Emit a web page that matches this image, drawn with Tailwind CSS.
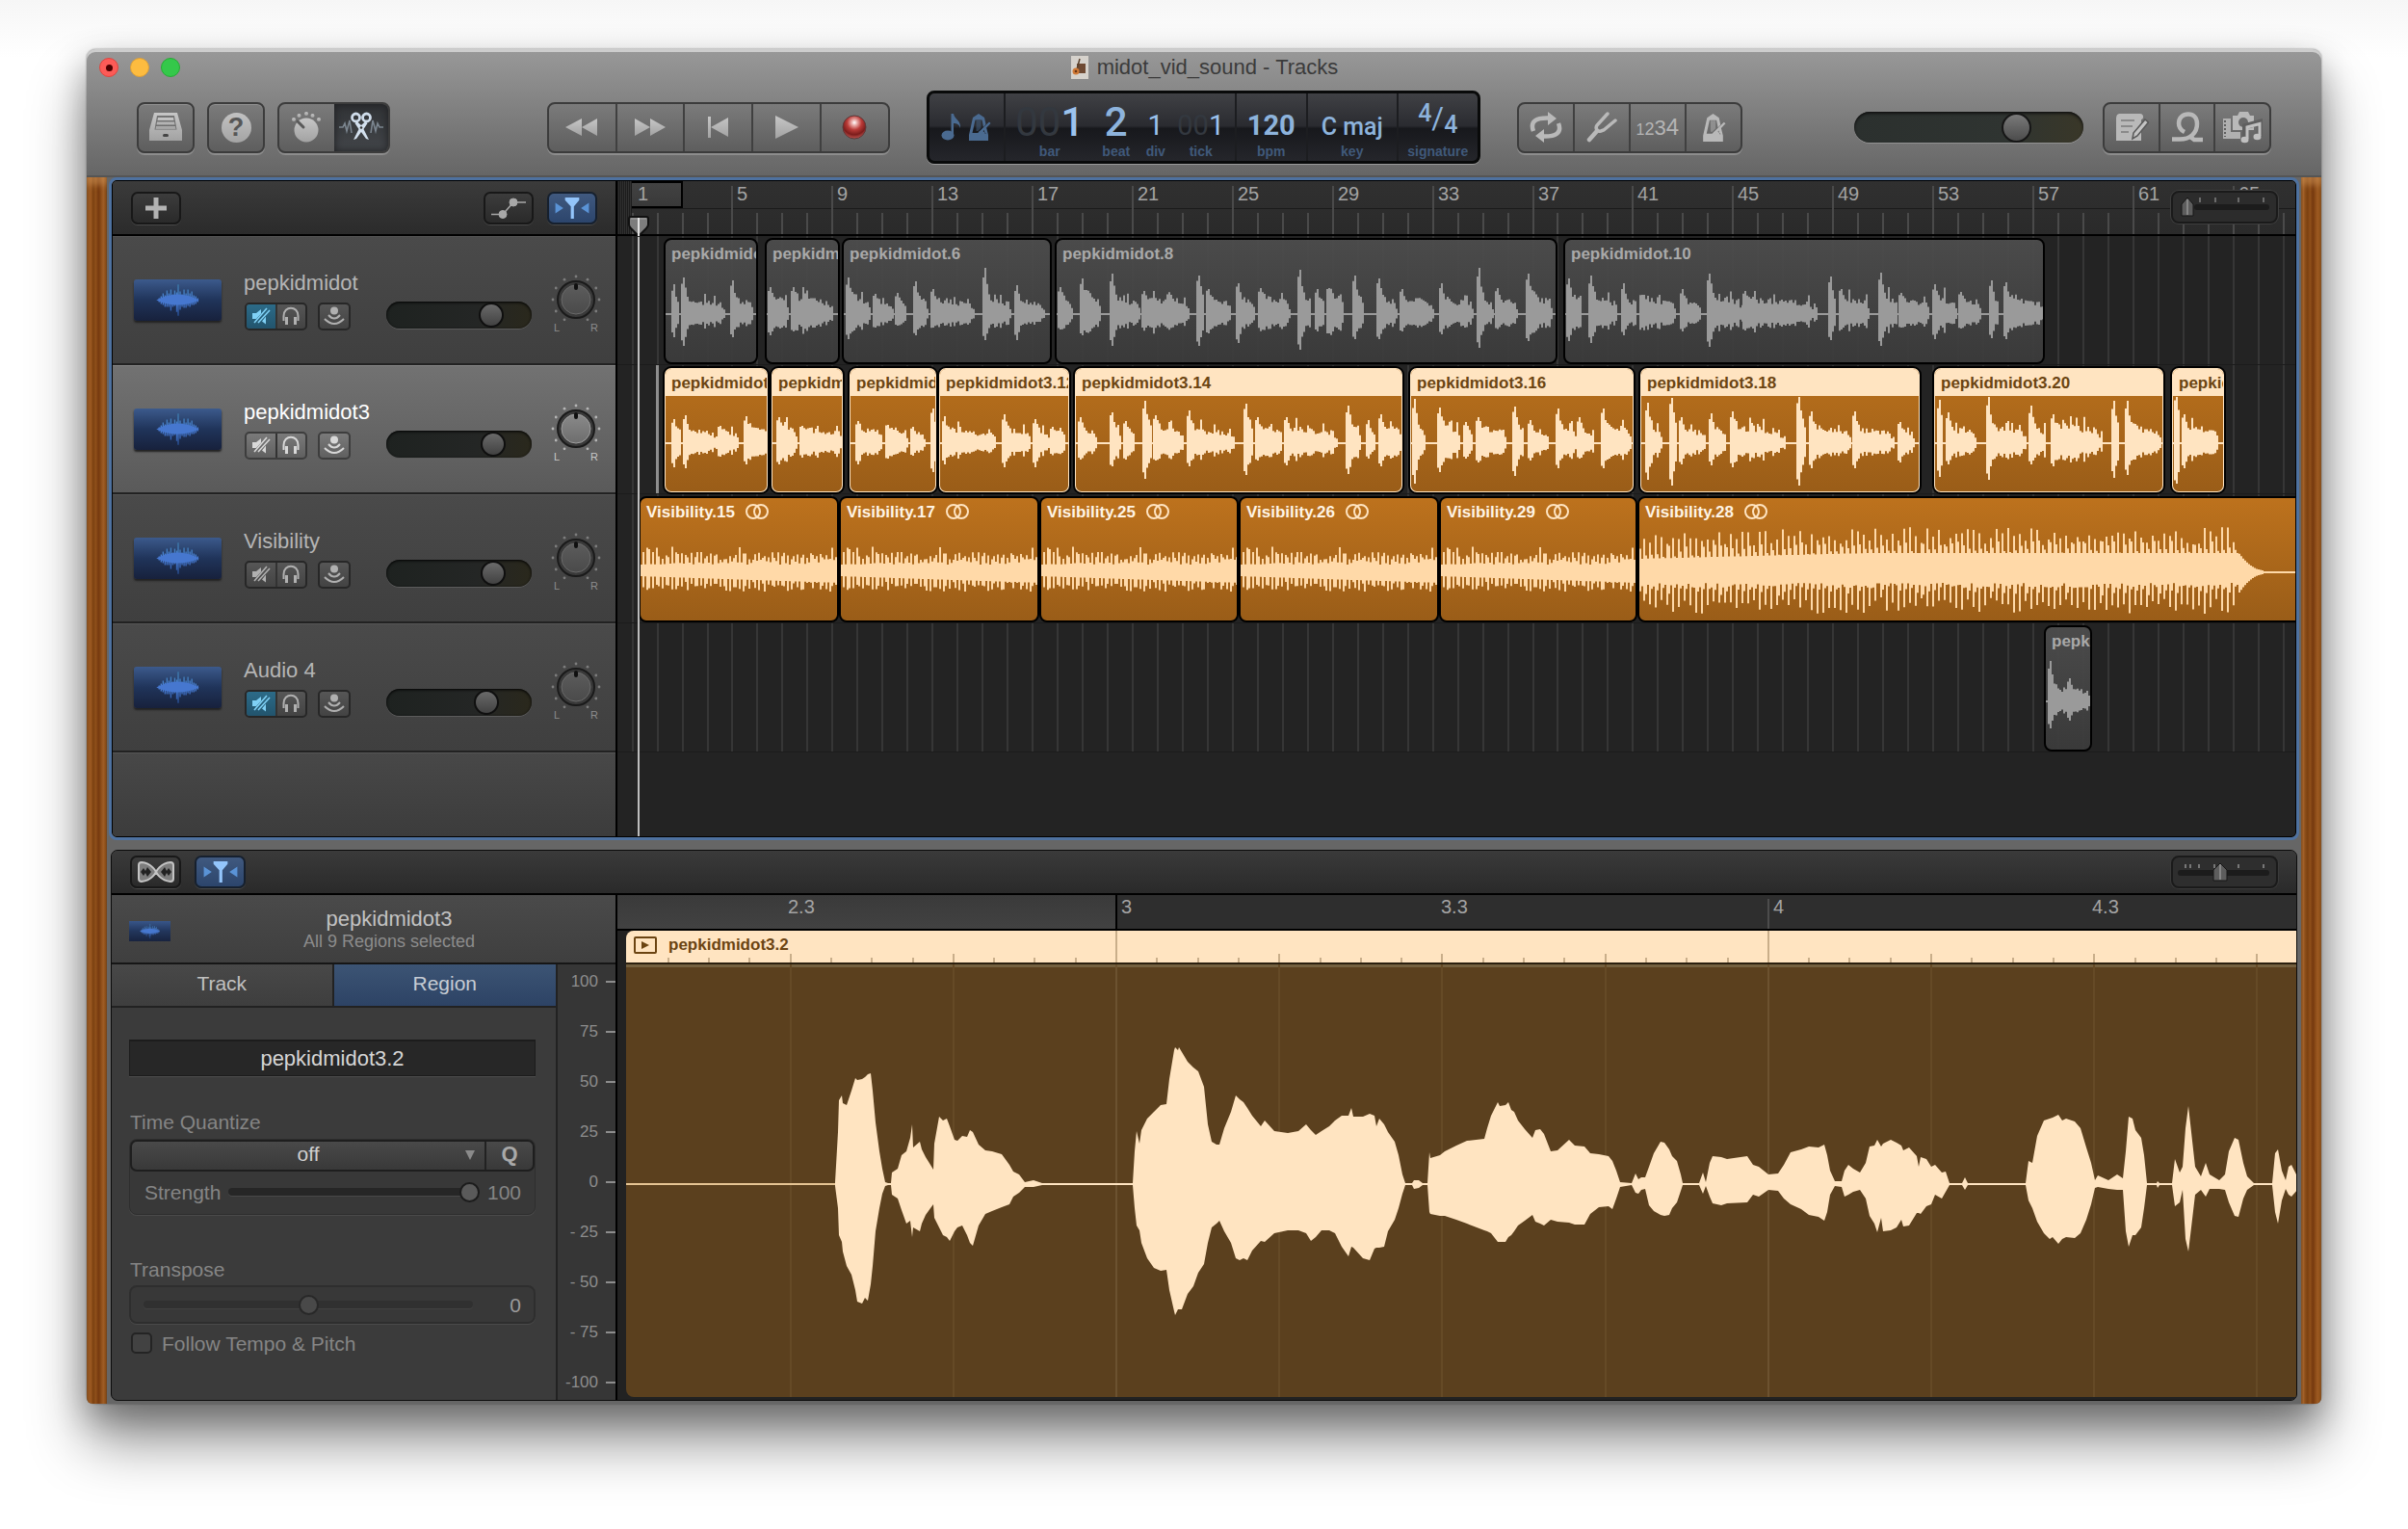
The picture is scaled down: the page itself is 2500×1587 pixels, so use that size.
<!DOCTYPE html>
<html lang="en">
<head>
<meta charset="utf-8">
<title>midot_vid_sound - Tracks</title>
<script src="https://cdn.jsdelivr.net/npm/@tailwindcss/browser@4"></script>
</head>
<body class="flex min-h-screen flex-col bg-[linear-gradient(180deg,#f6f6f6,#ffffff_60px)] px-[90px] pt-[51px] pb-[130px] font-['Liberation_Sans',Arial,sans-serif] text-[21px] leading-none text-[#b9b9b9]">

<svg class="absolute size-0" aria-hidden="true">
  <defs>
    <linearGradient id="metal" x1="0" y1="0" x2="0" y2="1"><stop offset="0" stop-color="#c6c6c6"/><stop offset="1" stop-color="#a2a2a2"/></linearGradient>
    <linearGradient id="waveBlue" gradientUnits="userSpaceOnUse" x1="0" y1="5" x2="0" y2="37"><stop offset="0" stop-color="#3a7aa8"/><stop offset=".5" stop-color="#4f86e0"/><stop offset="1" stop-color="#274e96"/></linearGradient>
    <linearGradient id="dialFace" x1="0" y1="0" x2="0" y2="1"><stop offset="0" stop-color="#5c5c5c"/><stop offset="1" stop-color="#4a4a4a"/></linearGradient>
    <linearGradient id="dialFaceLit" x1="0" y1="0" x2="0" y2="1"><stop offset="0" stop-color="#8a8a8a"/><stop offset="1" stop-color="#6d6d6d"/></linearGradient>
    <radialGradient id="recBall" cx=".5" cy=".3" r=".7"><stop offset="0" stop-color="#fff"/><stop offset=".18" stop-color="#e9a9a6"/><stop offset=".45" stop-color="#b93a37"/><stop offset=".75" stop-color="#7c1d1c"/><stop offset="1" stop-color="#c25551"/></radialGradient>
  </defs>
  <symbol id="metronome" viewBox="0 0 26 30">
    <path fill-rule="evenodd" d="M7 5 L13 1 L19 5 L20.500 12 L18 15 L16.500 7.500 H9.500 L6.500 21 H12 L16 18 L21 21.500 H19.500 L18.600 17.500 L21 15 L23 23 V29 H3 V23Z"/>
    <path d="M10.500 8 h5 v8 l-3 3 h-2z" opacity=".45"/><path d="M13 20 L24 9.500 L25.500 11 L15.500 21.500z"/>
  </symbol>
  <symbol id="funnel" viewBox="0 0 48 30">
    <path d="M5 9 L14 15 L5 21Z M43 9 L34 15 L43 21Z" fill="#5a93d6"/><path d="M16 3 H32 V6 L26 13 V27 H22.500 V13 L16 6Z" fill="#93c5fb"/>
  </symbol>
  <symbol id="thumbWave" viewBox="0 0 90 42">
    <path stroke="url(#waveBlue)" stroke-width="1.300" fill="none" d="M26 19v4 M28 17v8 M30 14v12 M32 16v12 M34 11v17 M36 14v14 M38 10v22 M40 15v13 M42 11v16 M44 13v20 M45.500 5v32 M47.500 12v19 M49.500 15v13 M51.500 10v19 M53.500 14v15 M55.500 10v17 M57.500 14v14 M59.500 12v14 M61.500 16v10 M63.500 17v8 M65.500 19v4"/>
    <path fill="#4677cf" d="M23 21 Q34 15 45 15 T67 21 Q56 26 45 26 T23 21Z"/>
  </symbol>
</svg>

<div class="flex flex-1 flex-col rounded-[9px] shadow-[0_0_2px_rgba(0,0,0,.5),0_14px_34px_rgba(0,0,0,.3),0_40px_60px_rgba(0,0,0,.42)]">

  <header class="flex h-[133px] shrink-0 flex-col rounded-t-[9px] border-b-2 border-[#555] bg-linear-to-b from-[#999] to-[#666] px-[52px] shadow-[inset_0_3px_0_#cdcdcd]">
    <div class="relative flex h-[38px] shrink-0 items-center justify-center gap-2">
      <div class="absolute left-[-39px] flex gap-3">
        <button aria-label="Close" class="flex size-5 items-center justify-center rounded-full border border-[#e0443e] bg-[#fc5b57]"><span class="size-[7px] rounded-full bg-[#4d0000]"></span></button>
        <button aria-label="Minimize" class="size-5 rounded-full border border-[#dea036] bg-[#fdbc40]"></button>
        <button aria-label="Zoom" class="size-5 rounded-full border border-[#27aa35] bg-[#34c84a]"></button>
      </div>
      <svg width="20" height="24" viewBox="0 0 18 24" aria-hidden="true"><rect width="18" height="24" fill="#d6d2cc"/><rect x="6" y="8" width="9" height="10" fill="#6f4a33"/><path d="M9 3 L6 14" stroke="#59402c" stroke-width="1.500"/><circle cx="5" cy="16" r="3.500" fill="#d07a36"/><circle cx="5" cy="16" r="1.300" fill="#6b3513"/></svg>
      <h1 class="text-[22px] text-[#3b3b3b]">midot_vid_sound - Tracks</h1>
    </div>

    <div class="flex h-[86px] shrink-0 items-center">
      <div class="flex gap-[13px]">
        <button aria-label="Library" class="flex h-[53px] w-[60px] items-center justify-center rounded-lg border-2 border-[#3c3c3c] bg-linear-to-b from-[#7b7b7b] to-[#5e5e5e] shadow-[inset_0_1px_0_#919191,0_2px_0_#8d8d8d]">
          <svg width="36" height="30" viewBox="0 0 36 30"><path fill="url(#metal)" fill-rule="evenodd" d="M6 0 H30 L35 18 V29 H1 V18Z M9 3 L6.500 17.500 H29.500 L27 3Z"/><path fill="url(#metal)" d="M10 5 h16 l.5 3 h-17z M9 9.500 h18 l.5 3 h-19z M8 14 h20 l.5 3 h-21z"/><rect x="15" y="22" width="6" height="3" rx="1.500" fill="#444"/></svg>
        </button>
        <button aria-label="Quick Help" class="flex h-[53px] w-[60px] items-center justify-center rounded-lg border-2 border-[#3c3c3c] bg-linear-to-b from-[#7b7b7b] to-[#5e5e5e] shadow-[inset_0_1px_0_#919191,0_2px_0_#8d8d8d]">
          <span class="flex size-[31px] items-center justify-center rounded-full bg-linear-to-b from-[#c2c2c2] to-[#a4a4a4] text-[27px] font-bold text-[#575757]">?</span>
        </button>
        <div class="flex h-[53px] w-[117px] overflow-hidden rounded-lg border-2 border-[#3c3c3c] bg-linear-to-b from-[#7b7b7b] to-[#5e5e5e] shadow-[0_2px_0_#8d8d8d]">
          <button aria-label="Smart Controls" class="flex flex-1 items-center justify-center">
            <svg width="32" height="32" viewBox="0 0 32 32" fill="url(#metal)"><circle cx="16" cy="19" r="12.500"/><circle cx="3" cy="8" r="2"/><circle cx="8.500" cy="4" r="2"/><circle cx="16" cy="2" r="2"/><circle cx="22.500" cy="4" r="2"/><circle cx="29" cy="8" r="2"/><path d="M7 10 L13 16" stroke="#5a5a5a" stroke-width="3" stroke-linecap="round"/></svg>
          </button>
          <button aria-label="Editors" class="flex flex-1 items-center justify-center bg-linear-to-b from-[#303235] to-[#43464a] shadow-[inset_0_0_8px_#1d1e20]">
            <svg width="46" height="34" viewBox="0 0 46 34" fill="none"><path d="M0 17 h4 l2-4 2 8 3-11 2 13 M46 17 h-4 l-2-4 -2 8 -3-11 -2 13" stroke="#7b858f" stroke-width="1.600"/><circle cx="17.500" cy="7" r="4" stroke="#cfdcea" stroke-width="2.800"/><circle cx="28.500" cy="7" r="4" stroke="#cfdcea" stroke-width="2.800"/><path d="M18.500 11 L23 15 L27.500 11 L29.500 13 L25.500 19 L31 30 L28 29 L23 22 L18 29 L15 30 L20.500 19 L16.500 13Z" fill="#d3e0ee"/><circle cx="23" cy="17.500" r="1.300" fill="#333"/></svg>
          </button>
        </div>
      </div>
      <div class="flex-[7]"></div>
      <div class="flex h-[53px] w-[356px] overflow-hidden rounded-lg border-2 border-[#3c3c3c] bg-linear-to-b from-[#7b7b7b] to-[#5e5e5e] shadow-[0_2px_0_#8d8d8d]">
        <button aria-label="Rewind" class="flex flex-1 items-center justify-center border-r-2 border-[#404040]"><svg width="34" height="20" viewBox="0 0 34 20" fill="url(#metal)"><path d="M0 10 L17 1 V19Z M17 10 L33 1 V19Z"/></svg></button>
        <button aria-label="Forward" class="flex flex-1 items-center justify-center border-r-2 border-[#404040]"><svg width="34" height="20" viewBox="0 0 34 20" fill="url(#metal)"><path d="M1 1 L17 10 L1 19Z M17 1 L33 10 L17 19Z"/></svg></button>
        <button aria-label="Go to Beginning" class="flex flex-1 items-center justify-center border-r-2 border-[#404040]"><svg width="24" height="24" viewBox="0 0 24 24" fill="url(#metal)"><path d="M1 1 h3 v22 h-3z M4 12 L22 2 V22Z"/></svg></button>
        <button aria-label="Play" class="flex flex-1 items-center justify-center border-r-2 border-[#404040]"><svg width="26" height="26" viewBox="0 0 26 26" fill="url(#metal)"><path d="M1 1 L25 13 L1 25Z"/></svg></button>
        <button aria-label="Record" class="flex flex-1 items-center justify-center"><svg width="26" height="26" viewBox="0 0 26 26"><circle cx="13" cy="13" r="12" fill="url(#recBall)" stroke="#5c3a3a"/></svg></button>
      </div>

      <div class="ml-[38px] flex h-[76px] w-[575px] overflow-hidden rounded-lg border-[3px] border-[#090a0a] bg-[linear-gradient(180deg,#404145,#2a2b30_48%,#17181c_52%,#25262b)] font-bold text-[#8db3dc] shadow-[0_1px_0_#9a9a9a]">
        <button aria-label="Display Mode" class="flex w-[79px] items-center justify-center gap-1 border-r-2 border-[#1c1d20]">
          <svg width="22" height="30" viewBox="0 0 22 30" fill="#4a6a90"><ellipse cx="7" cy="23.500" rx="6.500" ry="5"/><path d="M10.500 1 h2.500 c1 6 8 7 7 15 c-1-4 -4-5 -7-5 v13 h-2.500z"/></svg>
          <svg width="26" height="30" fill="#4a6a90"><use href="#metronome"/></svg>
        </button>
        <div class="flex w-[240px] border-r-2 border-[#1c1d20] pl-[9px] text-center">
          <div class="flex w-[74px] flex-col items-center gap-1"><span class="flex h-[49px] items-end font-[Roboto,sans-serif] text-[42px] leading-[38px] font-medium text-[#9cc3ee]"><span class="font-normal text-[#33383f]">00</span>1</span><span class="text-[14px] text-[#40597a]">bar</span></div>
          <div class="ml-[14px] flex w-[36px] flex-col items-center gap-1"><span class="flex h-[49px] items-end font-[Roboto,sans-serif] text-[42px] leading-[38px] font-medium">2</span><span class="text-[14px] text-[#40597a]">beat</span></div>
          <div class="ml-[8px] flex w-[30px] flex-col items-center gap-1"><span class="flex h-[49px] items-end font-[Roboto,sans-serif] text-[29px] leading-[31px] font-normal text-[#9cc3ee]">1</span><span class="text-[14px] text-[#40597a]">div</span></div>
          <div class="ml-[8px] flex w-[48px] flex-col items-center gap-1"><span class="flex h-[49px] items-end font-[Roboto,sans-serif] text-[29px] leading-[31px] font-normal text-[#9cc3ee]"><span class="text-[#33383f]">00</span>1</span><span class="text-[14px] text-[#40597a]">tick</span></div>
        </div>
        <div class="flex w-[74px] flex-col items-center gap-1 border-r-2 border-[#1c1d20]"><span class="flex h-[49px] items-end font-[Roboto,sans-serif] text-[29px] leading-[31px]">120</span><span class="text-[14px] text-[#40597a]">bpm</span></div>
        <div class="flex w-[94px] flex-col items-center gap-1 border-r-2 border-[#1c1d20]"><span class="flex h-[49px] items-end font-[Roboto,sans-serif] text-[25px] leading-[28px] font-medium whitespace-nowrap">C maj</span><span class="text-[14px] text-[#40597a]">key</span></div>
        <div class="flex flex-1 flex-col items-center gap-1">
          <span class="flex h-[49px] items-end font-[Roboto,sans-serif] text-[25px] font-medium"><span class="pb-4">4</span><span class="pb-2 text-[31px] font-normal">/</span><span class="pb-1">4</span></span>
          <span class="text-[14px] text-[#40597a]">signature</span>
        </div>
      </div>

      <div class="ml-[38px] flex h-[53px] w-[234px] overflow-hidden rounded-lg border-2 border-[#3c3c3c] bg-linear-to-b from-[#7b7b7b] to-[#5e5e5e] shadow-[0_2px_0_#8d8d8d]">
        <button aria-label="Cycle" class="flex flex-1 items-center justify-center border-r-2 border-[#404040]"><svg width="36" height="32" viewBox="0 0 36 32" fill="none" stroke="#b9b9b9" stroke-width="4.500"><path d="M5 20 C1 10 8 6 21 6.500"/><path d="M31 12 C35 22 28 26 15 25.500"/><path d="M20 0 L29 7 L20 14Z M16 18 L7 25 L16 32Z" fill="#b9b9b9" stroke="none"/></svg></button>
        <button aria-label="Tuner" class="flex flex-1 items-center justify-center border-r-2 border-[#404040]"><svg width="32" height="32" viewBox="0 0 32 32" fill="none" stroke="#b9b9b9" stroke-width="3.500" stroke-linecap="round"><path d="M3 29 L11 20" stroke-width="4.500"/><path d="M22 2 L11 14 C9 17 11 21 15 20 L18 19 L30 9"/></svg></button>
        <button aria-label="Count-in" class="flex flex-1 items-baseline justify-center border-r-2 border-[#404040] pt-3 text-[#b5b5b5]"><span class="text-[16px]">1</span><span class="text-[18px]">2</span><span class="text-[22px]">3</span><span class="text-[24px]">4</span></button>
        <button aria-label="Metronome" class="flex flex-1 items-center justify-center"><svg width="27" height="31" fill="#b9b9b9"><use href="#metronome"/></svg></button>
      </div>
      <div class="flex-[5]"></div>
      <input type="range" aria-label="Master Volume" value="74" class="h-8 w-[238px] appearance-none rounded-full bg-[linear-gradient(90deg,#2b302e,#2f3431_66%,#393728)] shadow-[inset_0_2px_3px_#111,0_1px_0_#929292] [&::-webkit-slider-thumb]:size-[31px] [&::-webkit-slider-thumb]:appearance-none [&::-webkit-slider-thumb]:rounded-full [&::-webkit-slider-thumb]:border-2 [&::-webkit-slider-thumb]:border-[#161616] [&::-webkit-slider-thumb]:bg-linear-to-b [&::-webkit-slider-thumb]:from-[#7a7a7a] [&::-webkit-slider-thumb]:to-[#4c4c4c]">
      <div class="ml-5 flex h-[53px] w-[175px] overflow-hidden rounded-lg border-2 border-[#3c3c3c] bg-linear-to-b from-[#7b7b7b] to-[#5e5e5e] shadow-[0_2px_0_#8d8d8d]">
        <button aria-label="Note Pad" class="flex flex-1 items-center justify-center border-r-2 border-[#404040]"><svg width="36" height="30" viewBox="0 0 36 30"><path d="M6 1 H27 C31 1 31 7 28 7 V29 H2 V7 C2 3 3 1 6 1Z" fill="#b9b9b9"/><path d="M7 8 h14 M7 14 h12 M7 20 h8" stroke="#8a8a8a" stroke-width="2"/><path d="M32 7 L35.500 10 L24 24 L19 27 L20 21Z" fill="#c4c4c4" stroke="#5a5a5a" stroke-width="1.600"/></svg></button>
        <button aria-label="Loop Browser" class="flex flex-1 items-center justify-center border-r-2 border-[#404040]"><svg width="34" height="32" viewBox="0 0 34 32" fill="none" stroke="#b9b9b9" stroke-width="4.500"><path d="M1 28.500 H9 C20 28.500 27 22 27 12.500 C27 6 23 2.500 18 2.500 C12 2.500 8 6.500 8 12 C8 16 10 19 14 21"/><path d="M20 26 L24 29 H33" /></svg></button>
        <button aria-label="Media Browser" class="flex flex-1 items-center justify-center"><svg width="42" height="34" viewBox="0 0 42 34"><path d="M1 8 h8 v14 h10 v7 H1Z" fill="#b0b0b0"/><path d="M3 10 v17" stroke="#5f5f5f" stroke-width="2" stroke-dasharray="2 2"/><path d="M11 5 h5 l2-4 h9 l2 4 h4 v15 h-22z" fill="#b9b9b9"/><circle cx="22" cy="12" r="5" fill="#696969"/><path d="M24 30 V16 L39 12 V27" stroke="#5f5f5f" stroke-width="6" fill="none"/><path d="M26 29 V17 L39 13.500 V26" stroke="#c0c0c0" stroke-width="3" fill="none"/><ellipse cx="23.500" cy="30" rx="4" ry="3.200" fill="#c0c0c0"/><ellipse cx="36.500" cy="27" rx="4" ry="3.200" fill="#c0c0c0"/></svg></button>
      </div>
    </div>
  </header>

  <div class="flex flex-1 rounded-b-[6px] bg-[#666]">
    <div class="w-[21px] shrink-0 rounded-bl-[6px] bg-[linear-gradient(90deg,#6b3a10,#8a4c18_10%,#9a5720_20%,#7c4212_32%,#8f4f1a_45%,#75390f_58%,#8a4a18_70%,#9c5b24_82%,#84450f_92%,#4e280a)] shadow-[inset_0_8px_6px_#d59a5c80]"></div>

    <main class="flex min-w-0 flex-1 flex-col gap-[10px] px-[2px] pb-[3px]">

      <section aria-label="Tracks" class="overflow-hidden rounded-[8px] border-[3px] border-[#4e719f]">
        <div class="flex overflow-hidden rounded-[5px] border border-black bg-[#232323]">
          <div class="w-[524px] shrink-0 border-r-2 border-black">
            <div class="flex h-[57px] items-center gap-[14px] border-b-2 border-black bg-linear-to-b from-[#3b3b3b] to-[#2b2b2b] px-[19px]">
              <button aria-label="Add Track" class="flex h-[34px] w-[52px] items-center justify-center rounded-[7px] border-2 border-[#181818] bg-linear-to-b from-[#3c3c3c] to-[#2a2a2a] shadow-[0_1px_0_#484848]"><svg width="22" height="22" viewBox="0 0 22 22"><path d="M11 0 V22 M0 11 H22" stroke="#b3b3b3" stroke-width="5"/></svg></button>
              <div class="flex-1"></div>
              <button aria-label="Show Automation" class="flex h-[34px] w-[52px] items-center justify-center rounded-[7px] border-2 border-[#181818] bg-linear-to-b from-[#3c3c3c] to-[#2a2a2a] shadow-[0_1px_0_#484848]"><svg width="36" height="24" viewBox="0 0 36 24" fill="#a8a8a8" stroke="#a8a8a8"><path d="M0 18.500 H12 L23 6 H36" fill="none" stroke-width="1.500"/><circle cx="12" cy="18.500" r="4"/><circle cx="23" cy="6" r="4"/></svg></button>
              <button aria-label="Catch Playhead" class="flex h-[34px] w-[52px] items-center justify-center rounded-[7px] border-2 border-[#16202e] bg-linear-to-b from-[#40597f] to-[#2c456c] shadow-[0_1px_0_#484848]"><svg width="44" height="28"><use href="#funnel"/></svg></button>
            </div>
            <div id="trackHeaders"></div>
            <div class="h-[87px] bg-linear-to-b from-[#484848] to-[#3c3c3c] shadow-[inset_0_1px_0_#555]"></div>
          </div>

          <div class="relative min-w-0 flex-1 overflow-hidden">
            <div id="ruler" class="relative h-[57px] overflow-hidden border-b-2 border-black bg-linear-to-b from-[#303030] to-[#2a2a2a] text-[20px] text-[#a3a3a3]">
              <div class="absolute inset-y-0 left-0 w-[15px] bg-[repeating-linear-gradient(90deg,#1c1c1c_0_1px,#303030_1px_2px)]"></div>
              <div class="absolute top-0 left-[15px] h-7 w-[53px] border-2 border-l-0 border-black bg-linear-to-b from-[#424242] to-[#393939]"></div>
              <div class="absolute top-7 right-0 left-[15px] h-px bg-[#1b1b1b]"></div>
              <svg id="rulerTicks" class="absolute inset-0 h-full w-full"></svg>
            </div>
            <svg id="grid" class="absolute top-[57px] left-0 h-[536px] w-full"></svg>
            <div id="lanes"></div>
            <div class="absolute top-[40px] bottom-0 left-[21px] w-[2px] bg-[#bdbdbd]"></div>
            <svg class="absolute top-[36px] left-[10px]" width="24" height="22" viewBox="0 0 24 22"><path d="M2 3 Q2 1 4 1 H20 Q22 1 22 3 V9 Q22 11 20 13 L12 21 L4 13 Q2 11 2 9Z" fill="#7d7d7d" stroke="#111" stroke-width="2"/><path d="M4 3 H20" stroke="#a8a8a8"/><path d="M12 2 V21" stroke="#e2e2e2" stroke-width="2"/></svg>
            <div class="absolute top-[10px] right-[18px] flex h-[34px] w-[111px] items-center rounded-[8px] border-2 border-[#1a1a1a] bg-[#2c2c2c] shadow-[0_0_0_1px_#3e3e3e]">
              <svg width="107" height="30" viewBox="0 0 107 30"><rect x="22" y="12" width="78" height="6" rx="3" fill="#1c1c1c"/><path d="M28 5 v5 M44 5 v5 M68 5 v5 M94 5 v5" stroke="#6b6b6b" stroke-width="2"/><path d="M15 5 L21 12 V24 H9 V12Z" fill="#5d5d5d" stroke="#161616"/><path d="M15 7 V23" stroke="#b0b0b0"/></svg>
            </div>
          </div>
        </div>
      </section>

      <section aria-label="Audio Editor" class="mx-[2px] flex flex-1 flex-col overflow-hidden rounded-[7px] border border-[#0c0c0c] bg-[#3b3b3b]">
        <div class="flex h-[46px] shrink-0 items-center gap-[14px] border-b-2 border-black bg-linear-to-b from-[#3a3a3a] to-[#2a2a2a] px-[19px]">
          <button aria-label="Flex" class="flex h-[34px] w-[53px] items-center justify-center rounded-[7px] border-2 border-[#181818] bg-linear-to-b from-[#3c3c3c] to-[#2a2a2a] shadow-[0_1px_0_#484848]"><svg width="40" height="24" viewBox="0 0 40 24" fill="none"><path d="M2 5 Q2 2 5 2 C16 3 20 12 20 12 C20 12 24 21 35 22 Q38 22 38 19 V5 Q38 2 35 2 C24 3 20 12 20 12 C20 12 16 21 5 22 Q2 22 2 19Z" fill="#7d7d7d" stroke="#c4c4c4" stroke-width="2"/><path d="M4 12 l3-4 2 3 2-4 4 5 -4 5 -2-4 -2 3z M36 12 l-3-4 -2 3 -2-4 -4 5 4 5 2-4 2 3z" fill="#222"/></svg></button>
          <button aria-label="Catch Playhead in Editor" class="flex h-[34px] w-[53px] items-center justify-center rounded-[7px] border-2 border-[#16202e] bg-linear-to-b from-[#40597f] to-[#2c456c] shadow-[0_1px_0_#484848]"><svg width="44" height="28"><use href="#funnel"/></svg></button>
          <div class="flex-1"></div>
          <div class="flex h-[34px] w-[111px] items-center rounded-[8px] border-2 border-[#1a1a1a] bg-[#2e2e2e] shadow-[0_0_0_1px_#3a3a3a]">
            <svg width="107" height="30" viewBox="0 0 107 30"><rect x="5" y="13" width="95" height="6" rx="3" fill="#1c1c1c"/><path d="M13 7 v4 M18 7 v4 M27 7 v4 M43 7 v4 M68 7 v4 M94 7 v4" stroke="#777" stroke-width="2"/><path d="M49 6 L56 13 V24 H42 V13Z" fill="#5d5d5d" stroke="#161616"/><path d="M49 7 V23" stroke="#b0b0b0"/></svg>
          </div>
        </div>

        <div class="flex min-h-0 flex-1">
          <div class="flex w-[525px] shrink-0 flex-col border-r-2 border-black">
            <div class="relative flex h-[72px] shrink-0 flex-col items-center justify-center gap-[3px] border-b-2 border-[#161616] bg-linear-to-b from-[#4a4a4a] to-[#3f3f3f] pl-[53px]">
              <svg class="absolute top-[27px] left-[18px] bg-linear-to-b from-[#38568a] via-[#22365c] to-[#18233f]" width="43" height="21" viewBox="0 0 90 42"><use href="#thumbWave"/></svg>
              <h2 class="text-[22px] text-[#c2c2c2]">pepkidmidot3</h2>
              <p class="text-[18px] text-[#8c8c8c]">All 9 Regions selected</p>
            </div>
            <div class="flex min-h-0 flex-1">
              <div class="w-[463px] border-r-2 border-[#222]">
                <div class="flex h-[45px] border-b-2 border-[#222]">
                  <button class="w-1/2 border-r-2 border-[#222] bg-linear-to-b from-[#484848] to-[#3e3e3e] pb-1 text-[#c0c0c0]">Track</button>
                  <button class="w-1/2 bg-linear-to-b from-[#3c5474] to-[#2d4365] pb-1 text-[#c6ccd4]">Region</button>
                </div>
                <div class="flex flex-col pt-[33px] pr-[21px] pl-[18px] text-[#858585]">
                  <input aria-label="Region Name" value="pepkidmidot3.2" class="h-[38px] border border-t-2 border-[#1c1c1c] bg-[#272727] text-center text-[22px] text-[#d6d6d6] shadow-[0_1px_0_#4c4c4c]">
                  <label for="quantize" class="mt-[36px] ml-[1px] leading-6">Time Quantize</label>
                  <div class="mt-[5px] rounded-[8px] border border-[#2e2e2e] bg-[#383838] shadow-[0_1px_0_#4a4a4a]">
                    <div class="relative flex h-[33px] overflow-hidden rounded-[7px] border-2 border-[#1e1e1e] bg-linear-to-b from-[#494949] to-[#393939]">
                      <select id="quantize" class="min-w-0 flex-1 appearance-none border-r-2 border-[#222] pb-1 text-center text-[#d0d0d0] [text-align-last:center]"><option>off</option></select>
                      <svg class="pointer-events-none absolute top-[9px] right-[60px]" width="10" height="10"><path d="M0 0 H10 L5 10Z" fill="#8b8b8b"/></svg>
                      <button class="w-[48px] pb-1 text-[22px] font-bold text-[#a9a9a9]">Q</button>
                    </div>
                    <div class="flex h-[44px] items-center gap-2 pr-[14px] pb-[2px] pl-[15px]">
                      <label for="strength">Strength</label>
                      <input id="strength" type="range" value="100" class="h-2 min-w-0 flex-1 appearance-none rounded-full bg-[#262626] shadow-[0_1px_0_#484848] [&::-webkit-slider-thumb]:size-[21px] [&::-webkit-slider-thumb]:appearance-none [&::-webkit-slider-thumb]:rounded-full [&::-webkit-slider-thumb]:border-2 [&::-webkit-slider-thumb]:border-[#1c1c1c] [&::-webkit-slider-thumb]:bg-[#5a5a5a]">
                      <output for="strength">100</output>
                    </div>
                  </div>
                  <label for="transpose" class="mt-[45px] ml-[1px] leading-6">Transpose</label>
                  <div class="mt-[4px] flex h-[40px] items-center rounded-[8px] border-2 border-[#2e2e2e] bg-[#383838] pr-[13px] pl-[13px] shadow-[0_1px_0_#4a4a4a]">
                    <input id="transpose" type="range" min="-12" max="12" value="0" class="h-2 w-[342px] appearance-none rounded-full bg-[#303030] shadow-[0_1px_0_#424242] [&::-webkit-slider-thumb]:size-[21px] [&::-webkit-slider-thumb]:appearance-none [&::-webkit-slider-thumb]:rounded-full [&::-webkit-slider-thumb]:border-2 [&::-webkit-slider-thumb]:border-[#282828] [&::-webkit-slider-thumb]:bg-[#494949]">
                    <output for="transpose" class="ml-auto text-[#9c9c9c]">0</output>
                  </div>
                  <label class="mt-[8px] flex h-[24px] items-center gap-[10px] pl-[2px]"><input type="checkbox" class="size-[22px] appearance-none rounded-[5px] border-2 border-[#242424] bg-[#424242]">Follow Tempo &amp; Pitch</label>
                </div>
              </div>
              <ol id="scale" class="flex min-w-0 flex-1 flex-col bg-[#363636] text-[17px] text-[#8d8d8d]"></ol>
            </div>
          </div>

          <div class="flex min-w-0 flex-1 flex-col bg-[#222]">
            <div id="editRuler" class="relative h-[37px] shrink-0 overflow-hidden border-b-2 border-black bg-[#2e2e2e] text-[20px] text-[#a3a3a3]">
              <div class="absolute top-0 left-0 h-full w-[519px] border-r-2 border-black bg-linear-to-b from-[#3a3a3a] to-[#424242]"></div>
            </div>
            <div class="relative mb-[3px] ml-[9px] flex flex-1 flex-col overflow-hidden rounded-l-[8px] bg-[#5b401e]">
              <div class="relative flex h-[35px] shrink-0 items-center gap-3 border-b-2 border-[#2b1f0e] bg-[#ffe4c1] pb-1 pl-2 text-[17px] font-bold text-[#6b4412]">
                <svg width="24" height="18" viewBox="0 0 24 18"><rect x="1" y="1" width="22" height="16" rx="1" fill="none" stroke="#6b4412" stroke-width="2"/><path d="M8 5 L16 9 L8 13Z" fill="#6b4412"/></svg>
                pepkidmidot3.2
                <svg id="editTicks" class="absolute inset-0 h-full w-full"></svg>
              </div>
              <div class="h-[3px] shrink-0 bg-[#74603f]"></div>
              <svg id="editWave" class="absolute top-[35px] left-0 h-[460px] w-full"></svg>
            </div>
          </div>
        </div>
      </section>
    </main>

    <div class="w-[21px] shrink-0 rounded-br-[6px] bg-[linear-gradient(90deg,#6b3a10,#9c5b24_12%,#8a4c18_20%,#7c4212_32%,#8f4f1a_45%,#75390f_58%,#8a4a18_70%,#9a5720_82%,#84450f_92%,#6b3a10)] shadow-[inset_0_8px_6px_#d59a5c80]"></div>
  </div>
</div>

<script>
const byId = id => document.getElementById(id);
const BAR = 25.97, BAR1 = 14.6;

function randomizer(seed) {
  let s = seed;
  return () => { s = (s * 16807) % 2147483647; return s / 2147483647; };
}
const column = (x, up, down, w) => `M${x} ${(79 - up).toFixed(1)}h${w}V${(79 + down).toFixed(1)}h-${w}z`;

// Vocal takes: each burst is [start, end, peak above, peak below, body].
function vocalPath(bursts, left) {
  const rnd = randomizer(bursts[0][0] * 31 + 7);
  let d = '';
  for (const [x0, x1, up, down, body] of bursts) {
    for (let x = x0, k = 0; x < x1; x += 2, k++) {
      const t = (x - x0) / (x1 - x0);
      const base = body * (1 - 0.35 * t) * (0.7 + 0.5 * rnd()) * (t > 0.9 ? 0.6 : 1);
      const decay = k === 0 ? 0.7 : Math.exp(-(k - 1) / 1.3);
      let u = base + Math.max(0, up - base) * decay;
      let v = base * 0.85 + Math.max(0, down - base * 0.85) * decay;
      if (k > 4 && rnd() > 0.84) { u = Math.min(up, u * 1.5); v *= 1.25; }
      d += column(x - left, u, v, 2);
    }
  }
  return d;
}
function loopPath(width) {
  const rnd = randomizer(4242);
  let d = '';
  for (let x = 0, k = 0; x < width; x += 2, k++) {
    const t = x / width, spike = k % 5 !== 1 && k % 5 !== 3;
    const u = spike ? 13 + 8 * rnd() + (rnd() > 0.93 ? 8 : 0) : 8 + 9 * t * rnd();
    const v = spike ? 10 + 10 * rnd() : 4 + 7 * t;
    d += column(x, u, v, 2);
  }
  return d;
}
function finalePath() {
  const rnd = randomizer(99);
  let d = '';
  for (let x = 0, k = 0; x < 650; x += 2, k++) {
    let u, v;
    if (x > 622) { const f = (650 - x) / 28; u = 20 * f * f + 2; v = 22 * f * f + 2; }
    else if (k % 3 === 0) { u = 28 + (10 + Math.min(9, x / 20)) * rnd(); v = 26 + 17 * rnd(); }
    else { u = 14 + Math.min(6, x / 40) + (k % 3 === 1 ? 13 * rnd() : 0); v = 11 + 5 * rnd() + (k % 3 === 1 ? 9 * rnd() : 0); }
    d += column(x, u, v, 2);
  }
  return d;
}

const tracks = [
  { name: 'pepkidmidot', vol: 77, muted: true, kind: 'muted', regions: [
    [48, 98, 'pepkidmidot.2', [[56,63,31,24,12],[66,112,38,33,16],[117,140,35,24,16]]],
    [153, 78, 'pepkidmidot.4', [[156,178,28,22,20],[180,223,28,18,18]]],
    [233, 218, 'pepkidmidot.6', [[237,262,38,26,18],[265,286,21,14,15],[288,300,22,12,14],[307,322,34,22,18],[325,371,26,14,15],[379,408,48,27,16],[412,443,30,27,14]]],
    [454, 522, 'pepkidmidot.8', [[457,472,28,16,17],[480,502,37,22,22],[511,543,42,33,17],[544,594,24,15,18],[601,609,40,33,20],[611,637,26,20,18],[642,661,32,30,17],[665,699,27,15,18],[706,720,46,37,20],[724,733,26,18,15],[736,753,27,20,24],[763,775,40,26,20],[788,809,37,26,18],[812,848,26,18,17],[853,889,32,21,16],[892,909,48,35,16],[911,935,27,15,16],[943,971,42,28,20]]],
    [982, 500, 'pepkidmidot.10', [[985,1001,37,28,20],[1008,1037,40,30,18],[1042,1058,32,22,16],[1061,1099,20,14,18],[1103,1125,26,18,14],[1131,1168,42,34,20],[1168,1245,24,17,16],[1257,1265,39,27,18],[1268,1300,26,16,18],[1309,1329,43,33,20],[1330,1362,22,14,15],[1365,1391,31,26,18],[1392,1416,23,15,15],[1424,1434,35,25,14],[1439,1480,33,26,17]]] ] },
  { name: 'pepkidmidot3', vol: 78, selected: true, kind: 'selected', regions: [
    [48, 109, 'pepkidmidot3.2', [[56,66,25,25,18],[68,103,29,26,15],[104,126,18,14,14],[131,156,28,22,17]]],
    [159, 76, 'pepkidmidot3.4', [[165,187,27,22,22],[189,234,18,12,16]]],
    [240, 92, 'pepkidmidot3.8', [[247,274,23,22,16],[278,302,19,16,15],[304,319,17,13,12],[325,331,36,30,18]]],
    [333, 137, 'pepkidmidot3.12', [[337,393,28,22,14],[399,429,30,25,15],[431,448,25,25,15],[449,465,17,12,14]]],
    [474, 342, 'pepkidmidot3.14', [[478,497,27,17,16],[511,522,32,24,20],[525,537,23,17,15],[545,554,44,37,22],[556,587,29,18,18],[591,640,34,24,15],[650,659,41,33,22],[662,689,27,18,18],[692,748,27,23,16],[756,771,39,32,22],[777,786,24,16,14],[790,813,30,24,20]]],
    [822, 234, 'pepkidmidot3.16', [[825,838,46,42,18],[851,875,37,30,20],[878,888,22,16,15],[891,923,27,20,18],[929,941,38,34,18],[945,966,24,18,15],[974,995,36,26,18],[996,1014,27,16,15],[1021,1053,36,26,18]]],
    [1061, 292, 'pepkidmidot3.18', [[1067,1084,42,38,18],[1092,1099,47,44,24],[1102,1130,27,22,15],[1133,1151,31,23,16],[1155,1212,33,25,18],[1224,1233,48,44,24],[1237,1280,33,26,18],[1282,1326,33,26,15],[1329,1346,22,20,15]]],
    [1366, 240, 'pepkidmidot3.20', [[1370,1376,45,35,18],[1379,1411,32,22,16],[1421,1462,48,38,18],[1465,1483,39,22,18],[1488,1541,30,24,20],[1551,1558,44,36,20],[1565,1602,44,33,18]]],
    [1613, 56, 'pepkidmidot3.22', [[1616,1622,48,42,40],[1624,1662,30,26,17]]] ] },
  { name: 'Visibility', vol: 78, kind: 'loop', regions: [
    [22, 208, 'Visibility.15', loopPath(208)], [230, 208, 'Visibility.17', loopPath(208)], [438, 207, 'Visibility.25', loopPath(207)],
    [645, 208, 'Visibility.26', loopPath(208)], [853, 206, 'Visibility.29', loopPath(206)], [1059, 696, 'Visibility.28', finalePath()] ] },
  { name: 'Audio 4', vol: 73, muted: true, kind: 'muted', regions: [
    [1481, 50, 'pepkidmidot.12', [[1485,1505,42,28,17],[1505,1529,24,20,13]]] ] },
];

const dialDots = Array.from({ length: 11 }, (_, i) => {
  const a = (i * 30 + 120) * Math.PI / 180;
  return `<circle cx="${(30 + 24 * Math.cos(a)).toFixed(1)}" cy="${(28 + 24 * Math.sin(a)).toFixed(1)}" r="1.400"/>`;
}).join('');

byId('trackHeaders').innerHTML = tracks.map(t => {
  const row = t.selected ? 'from-[#727272] to-[#5a5a5a] shadow-[inset_0_1px_0_#858585]' : 'from-[#4a4a4a] to-[#3f3f3f] shadow-[inset_0_1px_0_#555]';
  const btn = t.selected ? 'border-[#3d3d3d] bg-linear-to-b from-[#7a7a7a] to-[#606060]' : 'border-[#272727] bg-linear-to-b from-[#565656] to-[#434343]';
  const mute = t.muted ? 'bg-linear-to-b from-[#2c6b88] to-[#22546d]' : '';
  const ink = t.selected ? '#d8d8d8' : '#b0b0b0';
  return `<div class="flex h-[134px] items-center border-b-2 border-[#222] bg-linear-to-b pr-[11px] pl-[22px] ${row}">
    <svg class="rounded-[3px] bg-linear-to-b from-[#3c5a8c] via-[#20345a] to-[#17213c] shadow-[0_2px_2px_#222]" width="91" height="43" viewBox="0 0 90 42"><use href="#thumbWave"/></svg>
    <div class="ml-[23px] w-[112px]">
      <h2 class="text-[22px] leading-7 whitespace-nowrap ${t.selected ? 'text-white' : 'text-[#b5b5b5]'}">${t.name}</h2>
      <div class="mt-[6px] ml-[1px] flex gap-[11px]">
        <div class="flex h-[29px] w-[65px] overflow-hidden rounded-[5px] border-2 ${btn}">
          <button aria-label="Mute ${t.name}" class="flex flex-1 items-center justify-center border-r-2 border-[#333] ${mute}"><svg width="20" height="20" viewBox="0 0 20 20" fill="${t.muted ? '#7fd0f5' : ink}"><path d="M1 7 h4 l5-4 v4.500 L5 13 H1z M11 15.500 l4-5 v8z"/><path d="M3 17 L16 2 M7 17 L19 4" stroke="${t.muted ? '#7fd0f5' : ink}" stroke-width="1.600"/></svg></button>
          <button aria-label="Solo ${t.name}" class="flex flex-1 items-center justify-center"><svg width="20" height="20" viewBox="0 0 20 20" fill="none" stroke="${ink}"><path d="M2.500 15 V10 C2.500 -1 17.500 -1 17.500 10 V15" stroke-width="2"/><path d="M5.500 11 V19 M14.500 11 V19" stroke-width="3"/></svg></button>
        </div>
        <button aria-label="Input Monitoring ${t.name}" class="flex h-[29px] w-[34px] shrink-0 items-center justify-center rounded-[5px] border-2 ${btn}"><svg width="22" height="20" viewBox="0 0 22 20" fill="none" stroke="${ink}" stroke-width="2"><circle cx="11" cy="4.500" r="4" fill="${ink}" stroke="none"/><path d="M5 9 Q11 16 17 9"/><path d="M1 13 Q11 23 21 13"/></svg></button>
      </div>
    </div>
    <div class="flex-1"></div>
    <div class="flex items-end gap-[16px] pt-1">
      <input type="range" aria-label="Volume ${t.name}" value="${t.vol}" class="mb-[2px] h-[28px] w-[151px] appearance-none rounded-full bg-[linear-gradient(90deg,#1e2220,#242625_62%,#2a281c)] shadow-[inset_0_1px_3px_#000,0_1px_0_#5c5c5c] [&::-webkit-slider-thumb]:size-[26px] [&::-webkit-slider-thumb]:appearance-none [&::-webkit-slider-thumb]:rounded-full [&::-webkit-slider-thumb]:border-2 [&::-webkit-slider-thumb]:border-[#0f0f0f] [&::-webkit-slider-thumb]:bg-linear-to-b [&::-webkit-slider-thumb]:from-[#6a6a6a] [&::-webkit-slider-thumb]:to-[#424242]">
      <div class="relative h-[60px] w-[60px]" role="slider" aria-label="Pan ${t.name}" aria-valuenow="0">
        <svg width="60" height="56" viewBox="0 0 60 56"><g fill="${t.selected ? '#b5b5b5' : '#7d7d7d'}">${dialDots}</g><circle cx="30" cy="28" r="19" fill="#3a3a3a" stroke="#1a1a1a" stroke-width="2"/><circle cx="30" cy="28" r="15" fill="url(#${t.selected ? 'dialFaceLit' : 'dialFace'})" stroke="${t.selected ? '#a0a0a0' : '#6a6a6a'}"/><rect x="28" y="11" width="4" height="7" rx="2" fill="#101010"/></svg>
        <span class="absolute bottom-[-3px] left-[7px] text-[11px] ${t.selected ? 'text-[#c9c9c9]' : 'text-[#8d8d8d]'}">L</span><span class="absolute right-[7px] bottom-[-3px] text-[11px] ${t.selected ? 'text-[#c9c9c9]' : 'text-[#8d8d8d]'}">R</span>
      </div>
    </div>
  </div>`;
}).join('');

const looks = {
  muted: { box: 'border-black bg-linear-to-b from-[#4d4d4df0] to-[#3b3b3bf0]', title: 'text-[#a9a9a9]', wave: '#9a9a9a' },
  selected: { box: 'border-[#ffe4c1] bg-linear-to-b from-[#b9701c] to-[#9a5d18] outline-2 -outline-offset-1 outline-black', title: 'bg-[#ffe4c1] text-[#6b4412]', wave: '#ffe4c1' },
  loop: { box: 'border-black bg-linear-to-b from-[#bd721d] to-[#9a5d18]', title: 'text-[#fff4e4]', wave: '#ffd9a8' },
};
byId('lanes').innerHTML = tracks.map(t => {
  const look = looks[t.kind];
  return `<div class="relative h-[134px] border-b border-[#1c1c1c]">` +
    (t.selected ? `<div class="absolute inset-y-0 left-[40px] w-[3px] bg-[#8e8e8e]"></div>` : '') +
    t.regions.map(([left, width, name, wave]) => `<div class="absolute top-[2px] h-[131px] overflow-hidden rounded-[8px] border-2 ${look.box}" style="left:${left}px;width:${width}px">
      <div class="flex h-[28px] items-center gap-[11px] overflow-hidden pl-[6px] text-[17px] font-bold whitespace-nowrap ${look.title}">${name}${t.kind === 'loop' ? '<svg width="24" height="16" viewBox="0 0 24 16" fill="none" stroke="#ffe4c1" stroke-width="2"><circle cx="8" cy="8" r="7"/><circle cx="16" cy="8" r="7"/></svg>' : ''}</div>
      <svg class="absolute top-[-2px] left-[-2px]" width="${width}" height="131" fill="${look.wave}"><rect y="78" width="${width}" height="2"/><path d="${typeof wave === 'string' ? wave : vocalPath(wave, left)}"/></svg>
    </div>`).join('') + '</div>';
}).join('');

// Bar lines and numbers for the arrangement.
let ticks = '', grid = '', labels = '';
for (let bar = 1; bar <= 68; bar++) {
  const x = Math.round(BAR1 + (bar - 1) * BAR), major = bar % 4 === 1;
  ticks += `<rect x="${x}" y="${major && bar > 1 ? 5 : 33}" width="2" height="${major && bar > 1 ? 52 : 24}" fill="#4a4a4a"/>`;
  grid += `<rect x="${x}" y="0" width="2" height="536" fill="#363636"/>`;
  if (major) labels += `<span class="absolute top-[3px]" style="left:${x + 6}px">${bar}</span>`;
}
byId('rulerTicks').innerHTML = ticks;
byId('grid').innerHTML = grid;
byId('ruler').insertAdjacentHTML('beforeend', labels);

// Ruler, beat lines and amplitude scale for the editor.
const QUARTER = 42.3;
byId('editRuler').insertAdjacentHTML('beforeend', [['2.3', 177], ['3', 523], ['3.3', 855], ['4', 1200], ['4.3', 1531]]
  .map(([n, x]) => `<span class="absolute top-[2px]" style="left:${x}px">${n}</span>`).join('') + '<div class="absolute top-1 bottom-0 left-[1194px] w-[2px] bg-[#4c4c4c]"></div>');
let small = '', beats = '';
for (let i = -12; i <= 28; i++) {
  const x = Math.round(508 + i * QUARTER), h = i % 16 === 0 ? 35 : i % 4 === 0 ? 10 : 6;
  if (x < 20) continue;
  small += `<rect x="${x}" y="${35 - h - 1}" width="2" height="${h}" fill="#c9ae8a"/>`;
  if (i % 4 === 0) beats += `<rect x="${x}" y="0" width="2" height="460" fill="${i % 16 === 0 ? '#6c5230' : '#654a26'}"/>`;
}
byId('editTicks').innerHTML = small;
byId('scale').innerHTML = ['100', '75', '50', '25', '0', '- 25', '- 50', '- 75', '-100']
  .map(n => `<li class="flex h-[52px] shrink-0 items-start justify-end gap-2 pt-[9px] last:h-9">${n}<span class="mt-2 h-[2px] w-[10px] bg-[#8d8d8d]"></span></li>`).join('');

// Zoomed waveform: triples of x, height above and height below the centre line.
const take = [217,2,2,220,54,25,221,87,53,224,92,60,225,84,70,229,82,85,234,97,94,238,110,110,240,108,122,245,109,124,248,111,118,251,114,121,254,115,104,256,97,85,259,64,49,263,34,25,266,16,10,269,2,2,272,1,1,275,1,1,276,12,11,282,16,15,286,30,27,291,34,41,295,48,38,297,62,55,298,38,45,305,44,49,307,36,41,311,28,32,316,20,25,319,15,21,320,42,35,325,70,45,329,66,53,333,68,55,336,60,59,341,46,49,344,45,45,349,50,43,354,49,53,357,56,61,360,54,64,366,41,43,373,35,31,380,34,28,390,31,24,398,20,21,402,13,13,408,10,9,414,2,3,423,4,3,432,1,1,
526,1,1,528,34,25,530,55,43,533,42,48,535,56,61,541,68,77,548,75,87,555,82,90,561,83,89,564,109,110,569,139,132,570,142,136,573,139,130,574,142,130,577,137,130,583,127,114,589,121,106,594,117,92,600,101,83,604,62,61,608,44,45,613,41,41,616,41,38,621,58,49,628,75,61,633,92,77,637,88,79,641,85,77,645,79,79,650,71,69,659,60,59,663,66,60,673,55,51,687,53,48,698,55,48,706,62,51,711,56,59,716,51,55,722,55,48,730,60,48,736,66,51,743,71,65,750,71,75,753,79,65,755,70,66,765,70,77,772,73,79,777,71,67,779,60,66,782,68,66,787,62,65,791,54,49,798,44,37,802,30,25,806,10,10,809,1,1,816,1,1,818,4,5,823,4,4,827,1,1,832,1,1,834,33,29,835,27,31,845,30,33,
850,34,33,862,40,37,873,45,41,891,47,48,894,58,49,898,71,51,905,85,60,907,81,60,913,82,60,916,85,55,919,77,53,922,75,49,926,66,43,933,57,38,941,48,32,944,56,39,949,57,41,953,52,43,960,34,37,967,35,39,979,46,40,985,40,42,995,39,42,1001,32,31,1010,31,24,1020,29,23,1024,24,26,1028,14,15,1032,2,3,1044,1,1,1048,11,9,1051,5,10,1054,7,6,1058,7,5,1062,18,22,1067,32,28,1074,44,32,1078,43,33,1083,36,32,1086,29,25,1091,24,19,1095,10,7,1097,1,1,1114,1,1,1118,12,10,1121,2,2,1125,22,13,1128,29,20,1137,28,22,1143,26,20,1164,29,19,1170,20,11,1176,18,13,1186,10,6,1196,11,7,1202,20,15,1209,33,21,1220,36,26,1228,39,32,1238,38,34,1244,41,38,1247,30,29,1250,14,11,1255,3,2,1262,3,3,1265,14,13,1269,20,11,1274,16,8,1281,12,6,1287,22,15,1291,39,33,1296,40,41,1299,46,50,1303,39,35,1305,42,49,1313,46,48,1319,43,45,1324,40,37,1326,35,44,1332,38,43,1340,29,30,1342,18,30,1344,28,31,1350,26,23,1355,18,21,1359,20,11,1366,12,15,1370,13,8,1374,1,1,1387,1,1,1390,7,6,1393,1,1,
1453,1,1,1456,24,17,1460,22,25,1465,50,39,1472,66,51,1478,68,57,1481,69,55,1487,72,62,1491,66,57,1495,68,55,1504,65,56,1510,58,51,1516,38,37,1521,22,21,1525,4,4,1528,9,3,1539,4,5,1548,10,6,1554,6,6,1557,34,49,1560,70,65,1564,68,53,1567,56,53,1573,48,45,1576,30,25,1579,1,1,1589,1,1,1590,3,4,1592,1,1,1605,1,1,1608,26,23,1613,12,19,1616,18,6,1619,58,57,1622,81,70,1625,54,45,1629,18,11,1635,8,6,1640,22,13,1644,10,5,1654,4,5,1660,10,6,1664,34,19,1670,48,33,1674,46,34,1679,22,15,1683,8,6,1690,1,1,1709,1,1,1712,32,29,1715,36,41,1719,14,17,1723,4,5,1726,18,11,1729,20,13,1736,6,5];
const CENTER = 228, above = [], below = [];
for (let i = 0; i < take.length; i += 3) {
  above.push(`${take[i]},${CENTER - take[i + 1]}`);
  below.unshift(`${take[i]},${CENTER + take[i + 2]}`);
}
byId('editWave').innerHTML = `${beats}<rect x="0" y="${CENTER - 1}" width="100%" height="2" fill="#e5c493"/><polygon fill="#ffe4c1" points="${above.join(' ')} ${below.join(' ')}"/>`;
</script>
</body>
</html>
